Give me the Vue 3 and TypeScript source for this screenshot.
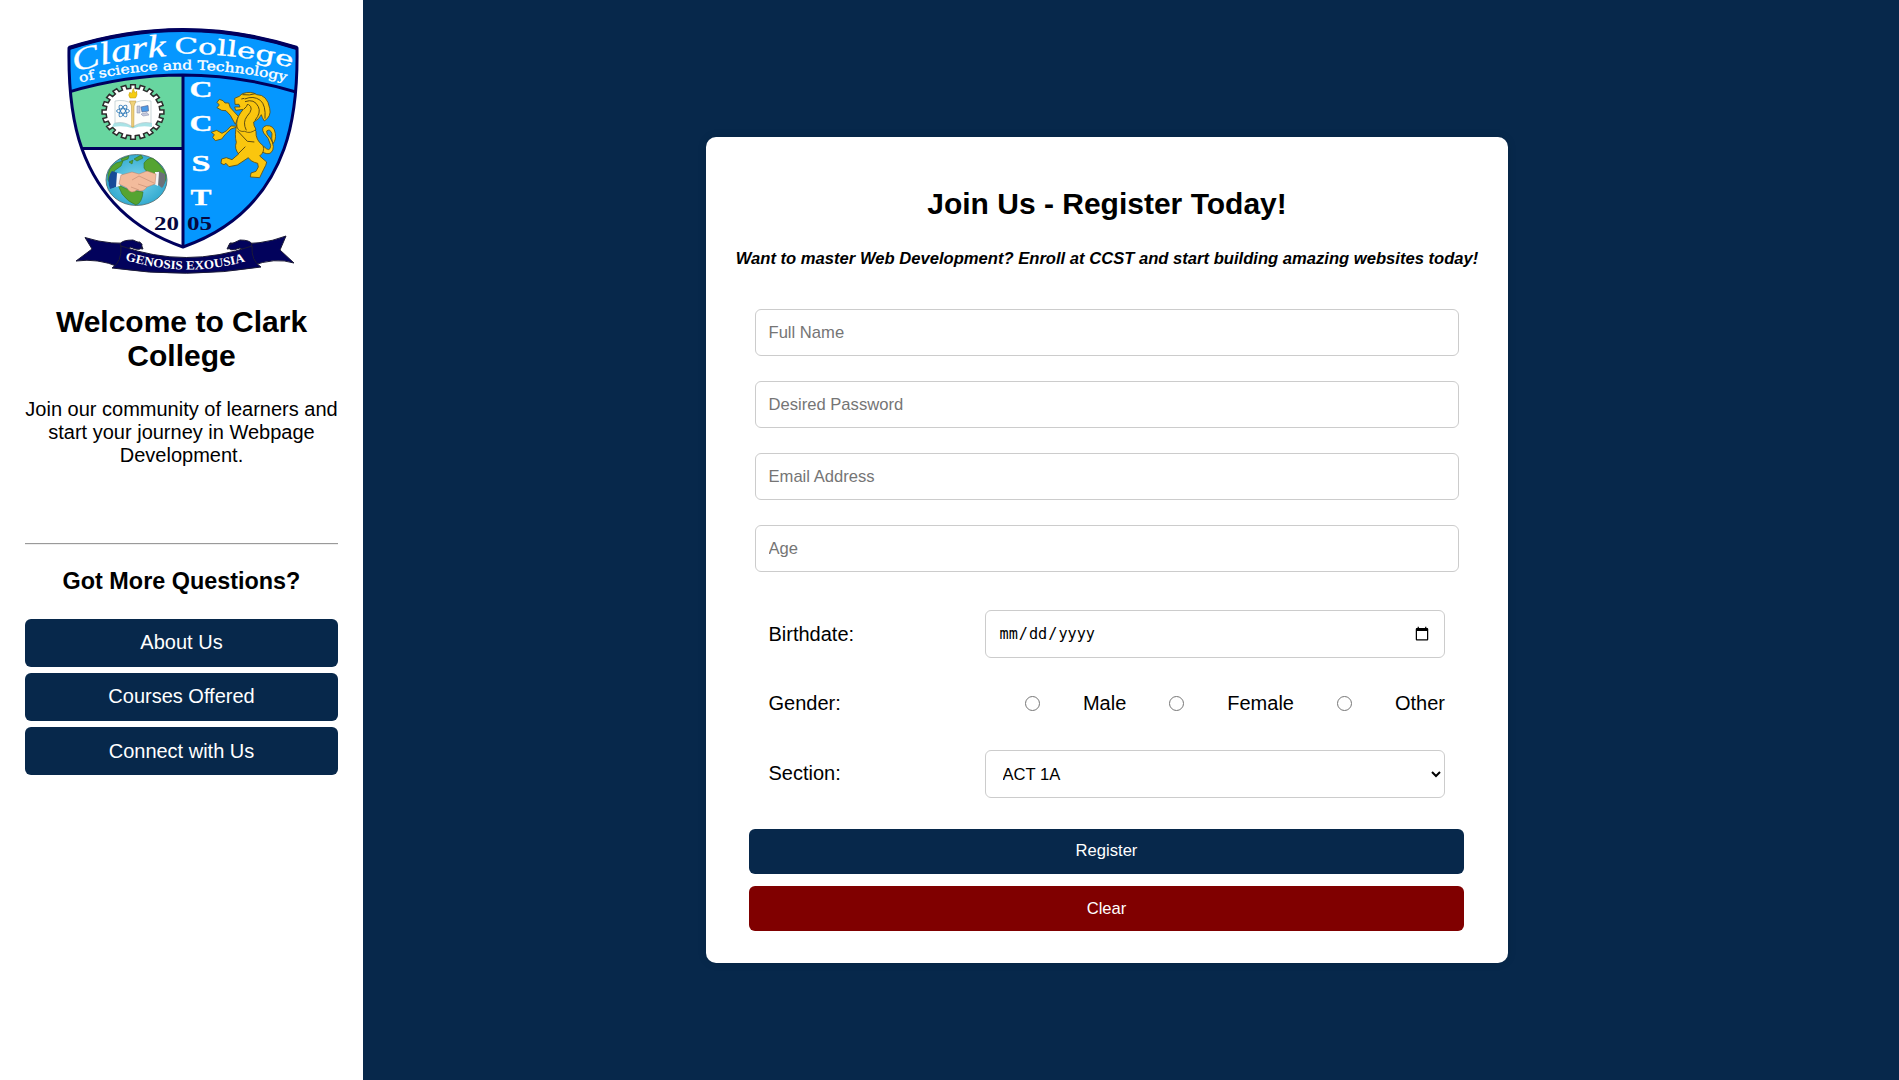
<script setup lang="ts">
import { ref } from 'vue'

const links: string[] = ['About Us', 'Courses Offered', 'Connect with Us']
const fields: { type: string; label: string }[] = [
  { type: 'text', label: 'Full Name' },
  { type: 'password', label: 'Desired Password' },
  { type: 'email', label: 'Email Address' },
  { type: 'number', label: 'Age' },
]
const genders: string[] = ['Male', 'Female', 'Other']
const sections: string[] = ['ACT 1A', 'ACT 1B', 'ACT 2A']
const section = ref('ACT 1A')
const initials: { ch: string; y: number; w: number }[] = [
  { ch: 'C', y: 97, w: 23 },
  { ch: 'C', y: 131, w: 23 },
  { ch: 'S', y: 171, w: 19 },
  { ch: 'T', y: 205, w: 21 },
]

// Cog outline of the crest: square teeth on an ellipse.
function gear(cx: number, cy: number, rx: number, ry: number, teeth: number): string {
  const pts: string[] = []
  const step = (Math.PI * 2) / teeth
  for (let i = 0; i < teeth; i++) {
    const a = i * step
    const corners: [number, number][] = [[-0.27, 0.87], [-0.24, 1], [0.24, 1], [0.27, 0.87]]
    for (const [t, k] of corners) {
      pts.push(`${(cx + Math.cos(a + t * step) * rx * k).toFixed(2)},${(cy + Math.sin(a + t * step) * ry * k).toFixed(2)}`)
    }
  }
  return pts.join(' ')
}
const cog = gear(133, 112, 31, 27.3, 20)
</script>

<template>
  <div class="page">
    <aside class="sidebar">
      <svg class="logo" viewBox="25 25 313 255" role="img" aria-label="Clark College crest">
        <defs>
          <clipPath id="shield"><path d="M69 48Q183 12 297 48Q298 110 284 149Q258 221 183 247Q108 221 82 149Q68 110 69 48Z" /></clipPath>
          <path id="arcClark" d="M75 72Q120 58 173 56" />
          <path id="arcCollege" d="M174 53.500Q240 53 294 68.500" />
          <path id="arcSub" d="M80 82.500Q183 57 288 82" />
          <path id="arcMotto" d="M125 260Q188 279 250 260" />
          <radialGradient id="sea"><stop offset="0" stop-color="#7cd6ee" /><stop offset="1" stop-color="#35abd0" /></radialGradient>
        </defs>
        <g clip-path="url(#shield)">
          <rect x="60" y="25" width="245" height="225" fill="#fff" />
          <rect x="60" y="60" width="123" height="88" fill="#68d6a0" />
          <rect x="183" y="60" width="120" height="190" fill="#0597ff" />
          <path d="M60 20H310V94Q183 57 60 94Z" fill="#0597ff" />
          <path d="M67 92.500Q183 57.500 298 92.500M183 75V250M78 148.500H183" fill="none" stroke="#00005e" stroke-width="3" />
        </g>
        <path d="M69 48Q183 12 297 48Q298 110 284 149Q258 221 183 247Q108 221 82 149Q68 110 69 48Z" fill="none" stroke="#00005e" stroke-width="3" stroke-linejoin="round" />
        <path d="M69 48Q183 12 297 48" fill="none" stroke="#00005e" stroke-width="4" />

        <g fill="#fff" stroke="#fff" stroke-width=".35">
          <text class="script" font-size="32"><textPath href="#arcClark" textLength="93" lengthAdjust="spacingAndGlyphs">Clark</textPath></text>
          <text class="serif" font-size="21.500"><textPath href="#arcCollege" textLength="119" lengthAdjust="spacingAndGlyphs">College</textPath></text>
          <text class="serif" font-size="13"><textPath href="#arcSub" textLength="208" lengthAdjust="spacingAndGlyphs">of science and Technology</textPath></text>
          <text v-for="(c, i) in initials" :key="i" class="serif bold" font-size="23.500" :x="201 - c.w / 2" :y="c.y" :textLength="c.w" lengthAdjust="spacingAndGlyphs">{{ c.ch }}</text>
        </g>

        <polygon :points="cog" fill="#fff" stroke="#2c2c2c" stroke-width="1.500" />
        <path d="M114 123Q124 120 132 127Q141 120 152 123V127Q141 125 133 128.500Q124 125 112 127Z" fill="#a9e3e6" />
        <path d="M115 101Q125 99 132.500 104Q141 99 151 101V123Q141 121 132.500 127Q125 121 115 123Z" fill="#fdfdfa" stroke="#b5c5cc" stroke-width=".7" />
        <g fill="none" stroke="#2e79b8" stroke-width=".9">
          <ellipse cx="123" cy="111" rx="6.500" ry="2.300" />
          <ellipse cx="123" cy="111" rx="6.500" ry="2.300" transform="rotate(60 123 111)" />
          <ellipse cx="123" cy="111" rx="6.500" ry="2.300" transform="rotate(-60 123 111)" />
        </g>
        <path d="M141 107L148 105.500L148.500 111L142 112Z" fill="#4c9be6" stroke="#56699a" stroke-width=".7" />
        <path d="M137 106H140V113H137ZM141 114L147 112.500L149 115L143 116Z" fill="#c4c9dc" stroke="#8088a8" stroke-width=".5" />
        <path d="M129.500 101H136L134 106L133.800 127H131.700L131.500 106Z" fill="#efd27a" stroke="#b98f35" stroke-width=".5" />
        <path d="M130 98Q127.500 95 130 92Q130.500 94 132 93Q132 90 133.500 88.500Q134 92 135.500 93L136.500 91Q138 95 135.500 98Z" fill="#f5cc12" stroke="#bd990e" stroke-width=".5" />

        <g>
          <ellipse cx="136.500" cy="180" rx="30.500" ry="25.500" fill="url(#sea)" stroke="#53686a" stroke-width=".8" />
          <g fill="#55a431" stroke="#347022" stroke-width=".6">
            <path d="M144 163Q150 155 155 160Q166 170 166 178Q164 188 159 184L157 175Q147 174 144 168Z" />
            <path d="M118 185L127 189L143 192Q142 203 136 205Q128 202 122 194Z" />
            <path d="M108 180Q107 168 116 163L123 161L121 166L114 171L117 178L113 188Z" />
            <path d="M121 159L129 156L128 159L122 161ZM134 159L141 155L143 158L137 161ZM129 162L133 160L132 164Z" />
          </g>
          <path d="M112 171L118 173V186L110 189Q107 181 110 174Z" fill="#164b98" />
          <path d="M158 171L165 174Q166 184 162 188L156 183Z" fill="#6c7078" />
          <path d="M117 173L122 174L120 186L116 187ZM155 172L159 172L158 186L154 184Z" fill="#f3f5f8" />
          <path d="M121 175L132 172L139 174L147 171L156 174L155 184L147 187Q143 193 137 190Q131 195 127 188L119 184Z" fill="#f3bb9c" stroke="#b67d65" stroke-width=".5" />
          <path d="M132 180L139 176L154 183M131 187L139 190M138 184L147 187" fill="none" stroke="#b67d65" stroke-width=".5" />
        </g>

        <!-- Rampant lion -->
        <g transform="translate(205 85) scale(.3333)" fill="#fac60e" stroke="#5c4a12" stroke-width="2.500" stroke-linejoin="round">
          <path d="M176 184Q196 205 197 181Q192 158 176 144Q167 126 184 122Q207 120 211 145Q214 164 204 176Q198 161 201 146Q195 130 185 138Q183 147 196 159Q213 188 198 203Q187 211 170 199Z" />
          <path d="M91 118L76 91L63 77L50 76L36 68L43 60L36 52L43 43L54 47L60 54L71 54L76 68L100 94Z" />
          <path d="M103 124L78 132L61 148L50 162L31 167L23 157L28 149L19 142L35 136L51 145L65 137L78 123Z" />
          <path d="M95 119Q88 151 94 172Q87 191 101 207L81 224L64 218L50 222L48 235L57 239L63 235L72 245L97 240L130 218Q137 230 158 235L160 246L153 259L138 264L136 276L164 278L176 253Q184 240 185 231L164 213Q181 199 174 182Q151 165 153 139L137 112Z" />
          <path d="M89 40L103 34L112 26Q139 17 155 29Q187 29 194 70Q200 94 178 108Q171 98 169 89Q164 102 146 111Q145 122 153 133Q136 148 119 139Q101 142 96 126Q92 104 107 83L115 73L92 76L89 66L105 66L102 58H90Z" />
          <path d="M112 29Q135 32 151 26M119 42Q145 31 166 46Q183 60 180 101M120 50Q148 40 160 65Q169 83 150 106M130 58Q149 69 126 94Q112 112 124 136M117 72Q126 65 128 57M109 42L118 40M97 137L127 169L148 171M99 207L121 185" fill="none" stroke-width="3" />
        </g>

        <g fill="#06083f">
          <text class="serif bold" font-size="19.500" x="154" y="230" textLength="25" lengthAdjust="spacingAndGlyphs">20</text>
          <text class="serif bold" font-size="19.500" x="187" y="230" textLength="25" lengthAdjust="spacingAndGlyphs">05</text>
        </g>
        <g fill="#02025c" stroke="#1c1b37" stroke-width="1">
          <path d="M85 237.500Q111 246 140 242L143 249Q130 248 130 244L119 267Q98 258 76 261L92 249Z" />
          <path d="M286 236Q260 246 230 243L227 249Q239 248 240 244L251 266Q275 257 294 263L280 250Z" />
          <path d="M120 244Q124 256 130 247Q143 253 142 244L133 240Q122 240 120 244ZM252 244Q249 256 240 248Q227 253 229 245L240 240Q250 240 252 244Z" />
          <path d="M121 246Q186 269 252 246Q251 261 261 267Q187 279 112 268Q122 262 121 246Z" />
        </g>
        <text class="serif bold" font-size="12.500" fill="#fff"><textPath href="#arcMotto" textLength="122" lengthAdjust="spacingAndGlyphs">GENOSIS EXOUSIA</textPath></text>
      </svg>
      <h2>Welcome to Clark College</h2>
      <p>Join our community of learners and start your journey in Webpage Development.</p>
      <hr />
      <h3>Got More Questions?</h3>
      <nav>
        <a v-for="link in links" :key="link">{{ link }}</a>
      </nav>
    </aside>

    <main>
      <section class="card">
        <h2>Join Us - Register Today!</h2>
        <h5>Want to master Web Development? Enroll at CCST and start building amazing websites today!</h5>
        <form @submit.prevent>
          <div class="fields">
            <input v-for="f in fields" :key="f.label" class="field" :type="f.type" :placeholder="f.label" />
          </div>
          <div class="row">
            <label for="birthdate">Birthdate:</label>
            <input id="birthdate" class="control date" type="date" />
          </div>
          <div class="row gender">
            <span>Gender:</span>
            <div class="options">
              <label v-for="g in genders" :key="g"><input type="radio" name="gender" :value="g" />{{ g }}</label>
            </div>
          </div>
          <div class="row section">
            <label for="section">Section:</label>
            <select id="section" v-model="section" class="control">
              <option v-for="s in sections" :key="s">{{ s }}</option>
            </select>
          </div>
          <div class="actions">
            <button type="submit">Register</button>
            <button type="reset" class="clear">Clear</button>
          </div>
        </form>
      </section>
    </main>
  </div>
</template>

<style>
body {
  margin: 0;
}
</style>

<style scoped>
.page {
  display: flex;
  height: 1080px;
  overflow: hidden;
  background: #07284b;
  color: #000;
  font-family: "Liberation Sans", Arial, sans-serif;
  font-size: 20px;
}
.page *,
.page {
  box-sizing: border-box;
}
h2 {
  margin: 0;
  font-size: 30px;
  line-height: 34px;
  text-align: center;
}
.sidebar {
  flex: none;
  width: 363px;
  padding: 25px;
  background: #fff;
  text-align: center;
}
.logo {
  display: block;
  width: 313px;
  height: 255px;
  margin-bottom: 25px;
}
.script {
  font-family: "Liberation Serif", "Times New Roman", serif;
  font-style: italic;
}
.serif {
  font-family: "DejaVu Serif", serif;
}
.serif.bold {
  font-family: "Liberation Serif", "Times New Roman", serif;
  font-weight: bold;
}
.sidebar p {
  margin: 25px -5px 76px;
  padding: 0 5px;
  line-height: 23px;
}
hr {
  height: 2px;
  margin: 0;
  border: 0;
  border-top: 1px solid #9a9a9a;
  border-bottom: 1px solid #eee;
}
h3 {
  margin: 23px 0 24px;
  font-size: 23.4px;
  line-height: 27px;
}
nav {
  display: flex;
  flex-direction: column;
  gap: 6px;
}
nav a {
  height: 48px;
  border-radius: 6px;
  background: #07284b;
  color: #fff;
  line-height: 47px;
}
nav a:last-child {
  line-height: 49px;
}
main {
  flex: 1;
  display: flex;
  justify-content: center;
  align-items: center;
  padding: 20px 48px 0 0;
}
.card {
  width: 802px;
  height: 826px;
  padding: 50px 30px 32px;
  border-radius: 10px;
  background: #fff;
  box-shadow: 0 0 10px rgba(0, 0, 0, 0.1);
}
h5 {
  margin: 28px -10px 41px;
  font-size: 16.6px;
  font-style: italic;
  line-height: 19px;
  text-align: center;
  white-space: nowrap;
}
.fields {
  display: flex;
  flex-direction: column;
  gap: 25px;
  padding: 0 19px;
  margin-bottom: 38px;
}
.field,
.control {
  margin: 0;
  border: 1px solid #ccc;
  border-radius: 6px;
  background: #fff;
  color: #000;
  font-family: inherit;
  font-size: 16.6px;
}
.field {
  height: 47px;
  padding: 0 12.5px;
}
.field::placeholder {
  color: #757575;
}
.row {
  display: flex;
  justify-content: space-between;
  align-items: center;
  height: 48px;
  margin: 0 33px 0 32.5px;
}
.control {
  width: 460px;
  height: 48px;
  padding: 0 12.5px;
}
.date {
  font-family: "DejaVu Sans Mono", monospace;
  font-size: 15.2px;
}
.gender {
  height: 92px;
  padding-bottom: 2px;
}
.section label {
  padding-bottom: 2px;
}
.options {
  display: flex;
  gap: 43px;
}
.options label {
  display: flex;
  align-items: center;
}
.options input {
  width: 15px;
  height: 15px;
  margin: 1px 43px 0 0;
}
.actions {
  display: flex;
  flex-direction: column;
  gap: 12px;
  margin: 31px 14px 0 13px;
}
button {
  height: 45px;
  padding: 0 0 2px;
  border: 0;
  border-radius: 6px;
  background: #07284b;
  color: #fff;
  font-family: inherit;
  font-size: 16.6px;
}
.clear {
  padding: 0;
  background: #800000;
}
</style>
